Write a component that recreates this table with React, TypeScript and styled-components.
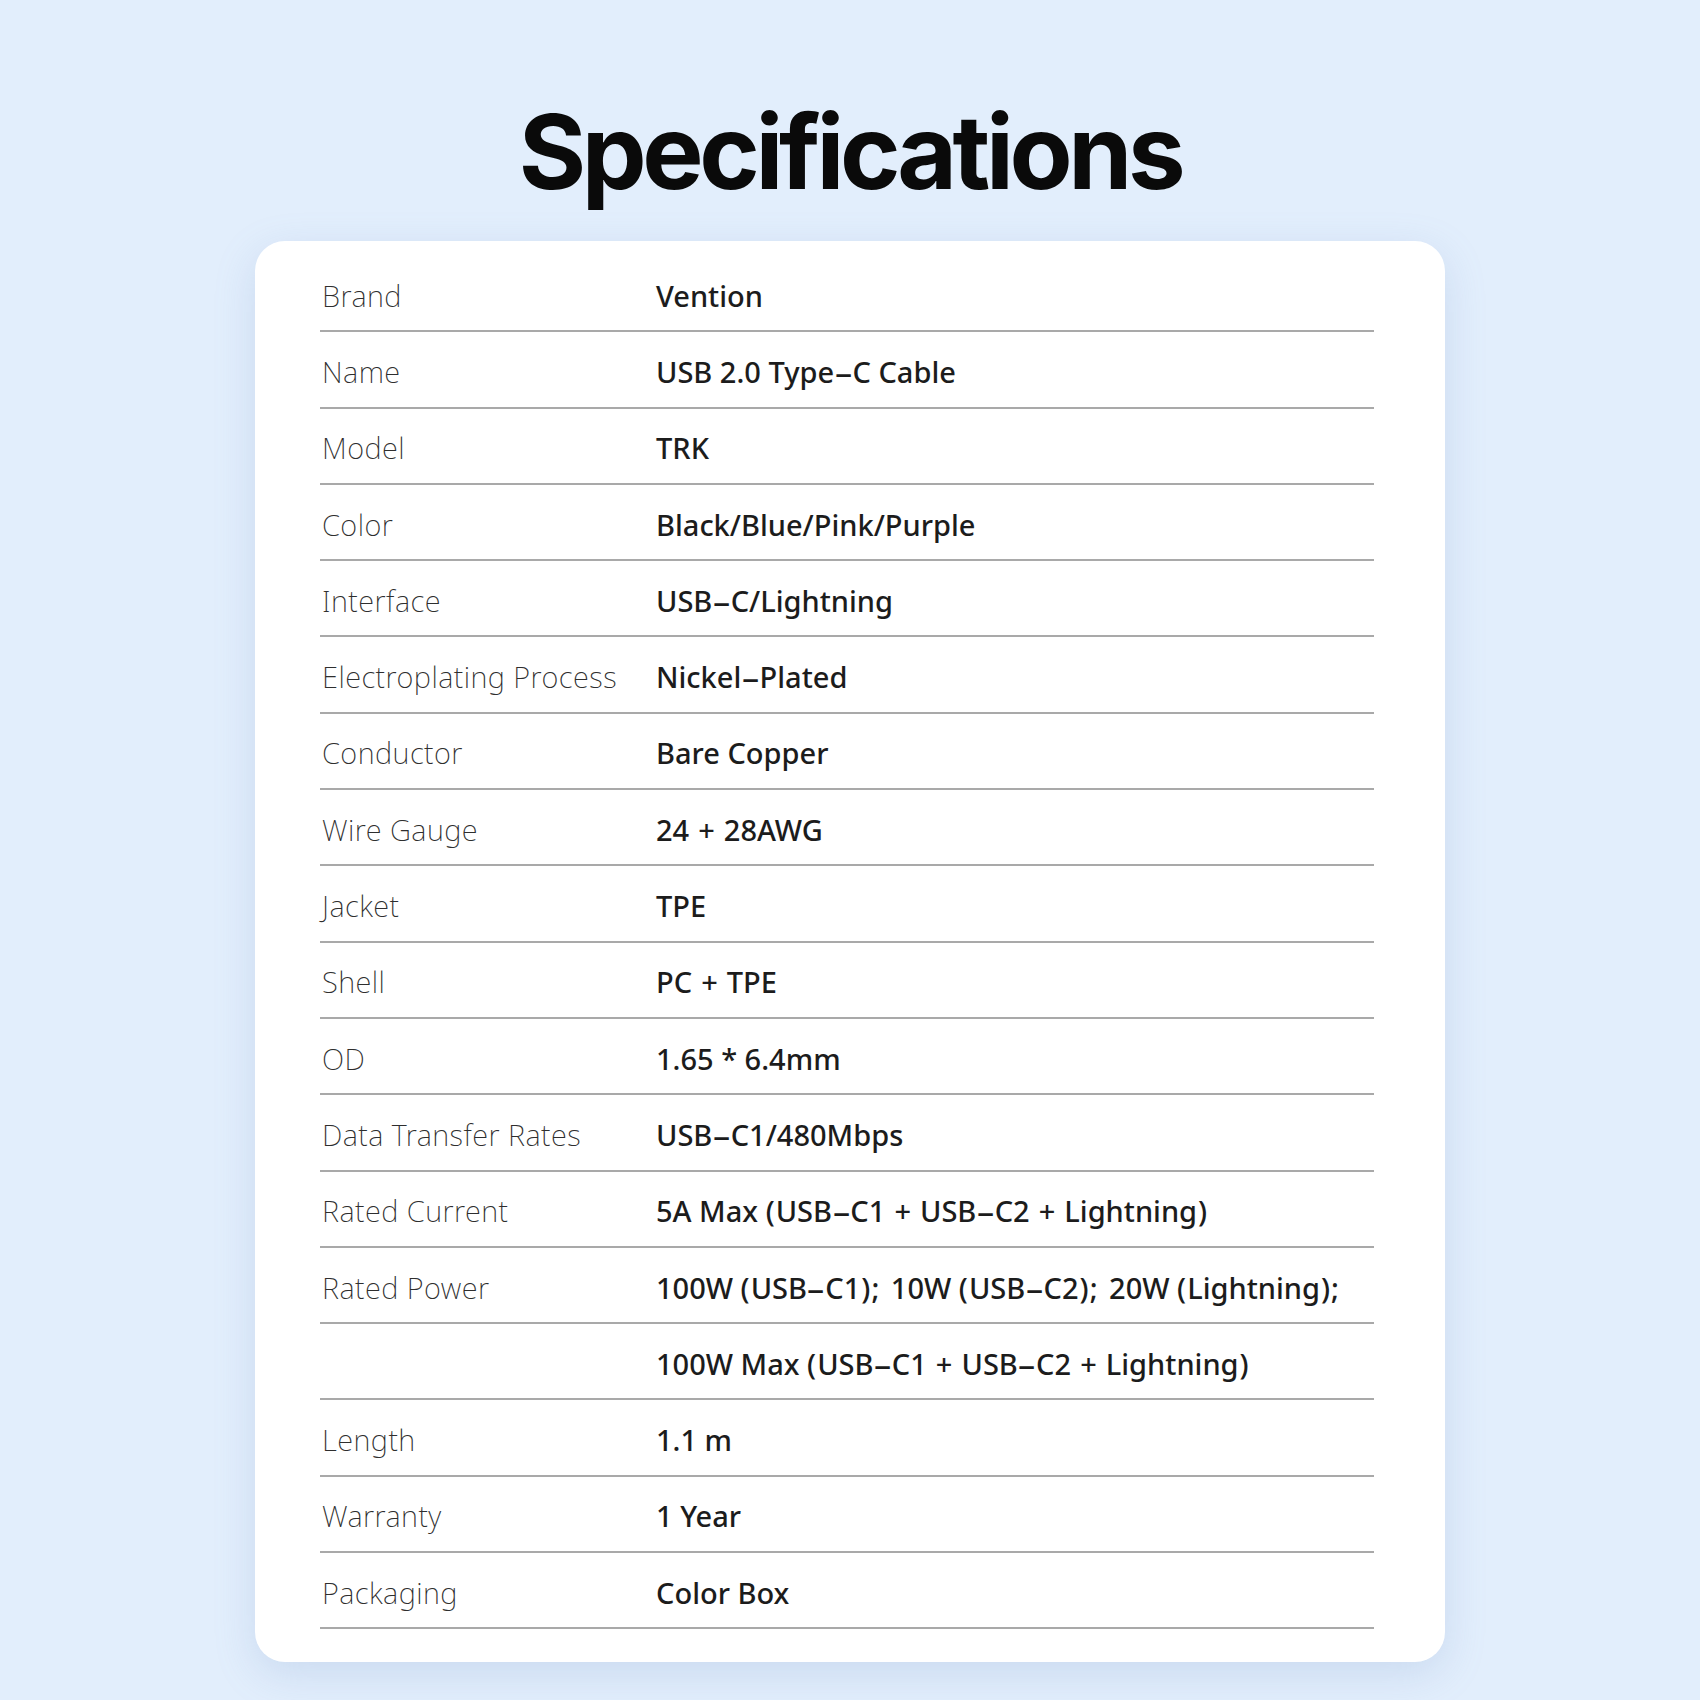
import React from "react";
import styled, { createGlobalStyle } from "styled-components";

const GlobalStyle = createGlobalStyle`
  html, body {
    margin: 0;
    padding: 0;
    background: #e2eefc;
  }
  body {
    font-family: "Noto Sans", "Open Sans", sans-serif;
  }
`;

const Page = styled.div`
  width: 1700px;
  height: 1700px;
  box-sizing: border-box;
  display: flex;
  flex-direction: column;
  align-items: center;
  padding-top: 96px;
  background: #e2eefc;
`;

const Title = styled.h1`
  margin: 0;
  font-family: "Inter", "Noto Sans", sans-serif;
  font-weight: 700;
  font-size: 103px;
  line-height: 112px;
  letter-spacing: -4.4px;
  color: #0a0a0a;
`;

const Card = styled.div`
  margin-top: 33px;
  width: 1190px;
  box-sizing: border-box;
  padding: 15px 71px 33px 65px;
  background: #ffffff;
  border-radius: 30px;
  box-shadow: 0 12px 40px rgba(120, 150, 200, 0.22);
`;

const Row = styled.div`
  display: grid;
  grid-template-columns: 336px 1fr;
  align-items: center;
  height: 76.3px;
  box-sizing: border-box;
  border-bottom: 2px solid #a9a9a9;
  padding-top: 4px;
`;

const Label = styled.div`
  font-family: "Noto Sans", sans-serif;
  font-weight: 200;
  font-size: 29px;
  letter-spacing: 0.45px;
  color: #2e2e2e;
  padding-left: 2px;
  white-space: nowrap;
`;

const Value = styled.div`
  font-family: "Noto Sans", sans-serif;
  font-weight: 500;
  font-size: 29px;
  color: #1c1c1c;
  white-space: nowrap;
`;

const Dash = styled.span`
  display: inline-block;
  transform: scaleX(2);
  margin: 0 4.5px;
`;

const Punct = styled.span<{ $l?: number; $r?: number }>`
  margin-left: ${(p) => p.$l ?? 0}px;
  margin-right: ${(p) => p.$r ?? 0}px;
`;

function renderValue(text: string) {
  const parts = text.split(/([-+();])/);
  return parts.map((part, i) => {
    if (part === "-") return <Dash key={i}>-</Dash>;
    if (part === "+") return <Punct key={i} $l={1.5} $r={1.5}>+</Punct>;
    if (part === "(") return <Punct key={i} $r={1}>(</Punct>;
    if (part === ")") return <Punct key={i} $l={1}>)</Punct>;
    if (part === ";") return <Punct key={i} $l={1} $r={4}>;</Punct>;
    return <React.Fragment key={i}>{part}</React.Fragment>;
  });
}

const specs: [string, string][] = [
  ["Brand", "Vention"],
  ["Name", "USB 2.0 Type-C Cable"],
  ["Model", "TRK"],
  ["Color", "Black/Blue/Pink/Purple"],
  ["Interface", "USB-C/Lightning"],
  ["Electroplating Process", "Nickel-Plated"],
  ["Conductor", "Bare Copper"],
  ["Wire Gauge", "24 + 28AWG"],
  ["Jacket", "TPE"],
  ["Shell", "PC + TPE"],
  ["OD", "1.65 * 6.4mm"],
  ["Data Transfer Rates", "USB-C1/480Mbps"],
  ["Rated Current", "5A Max (USB-C1 + USB-C2 + Lightning)"],
  ["Rated Power", "100W (USB-C1); 10W (USB-C2); 20W (Lightning);"],
  ["", "100W Max (USB-C1 + USB-C2 + Lightning)"],
  ["Length", "1.1 m"],
  ["Warranty", "1 Year"],
  ["Packaging", "Color Box"],
];

export default function App() {
  return (
    <>
      <GlobalStyle />
      <Page>
        <Title>Specifications</Title>
        <Card>
          {specs.map(([label, value], i) => (
            <Row key={i}>
              <Label>{label}</Label>
              <Value>{renderValue(value)}</Value>
            </Row>
          ))}
        </Card>
      </Page>
    </>
  );
}
